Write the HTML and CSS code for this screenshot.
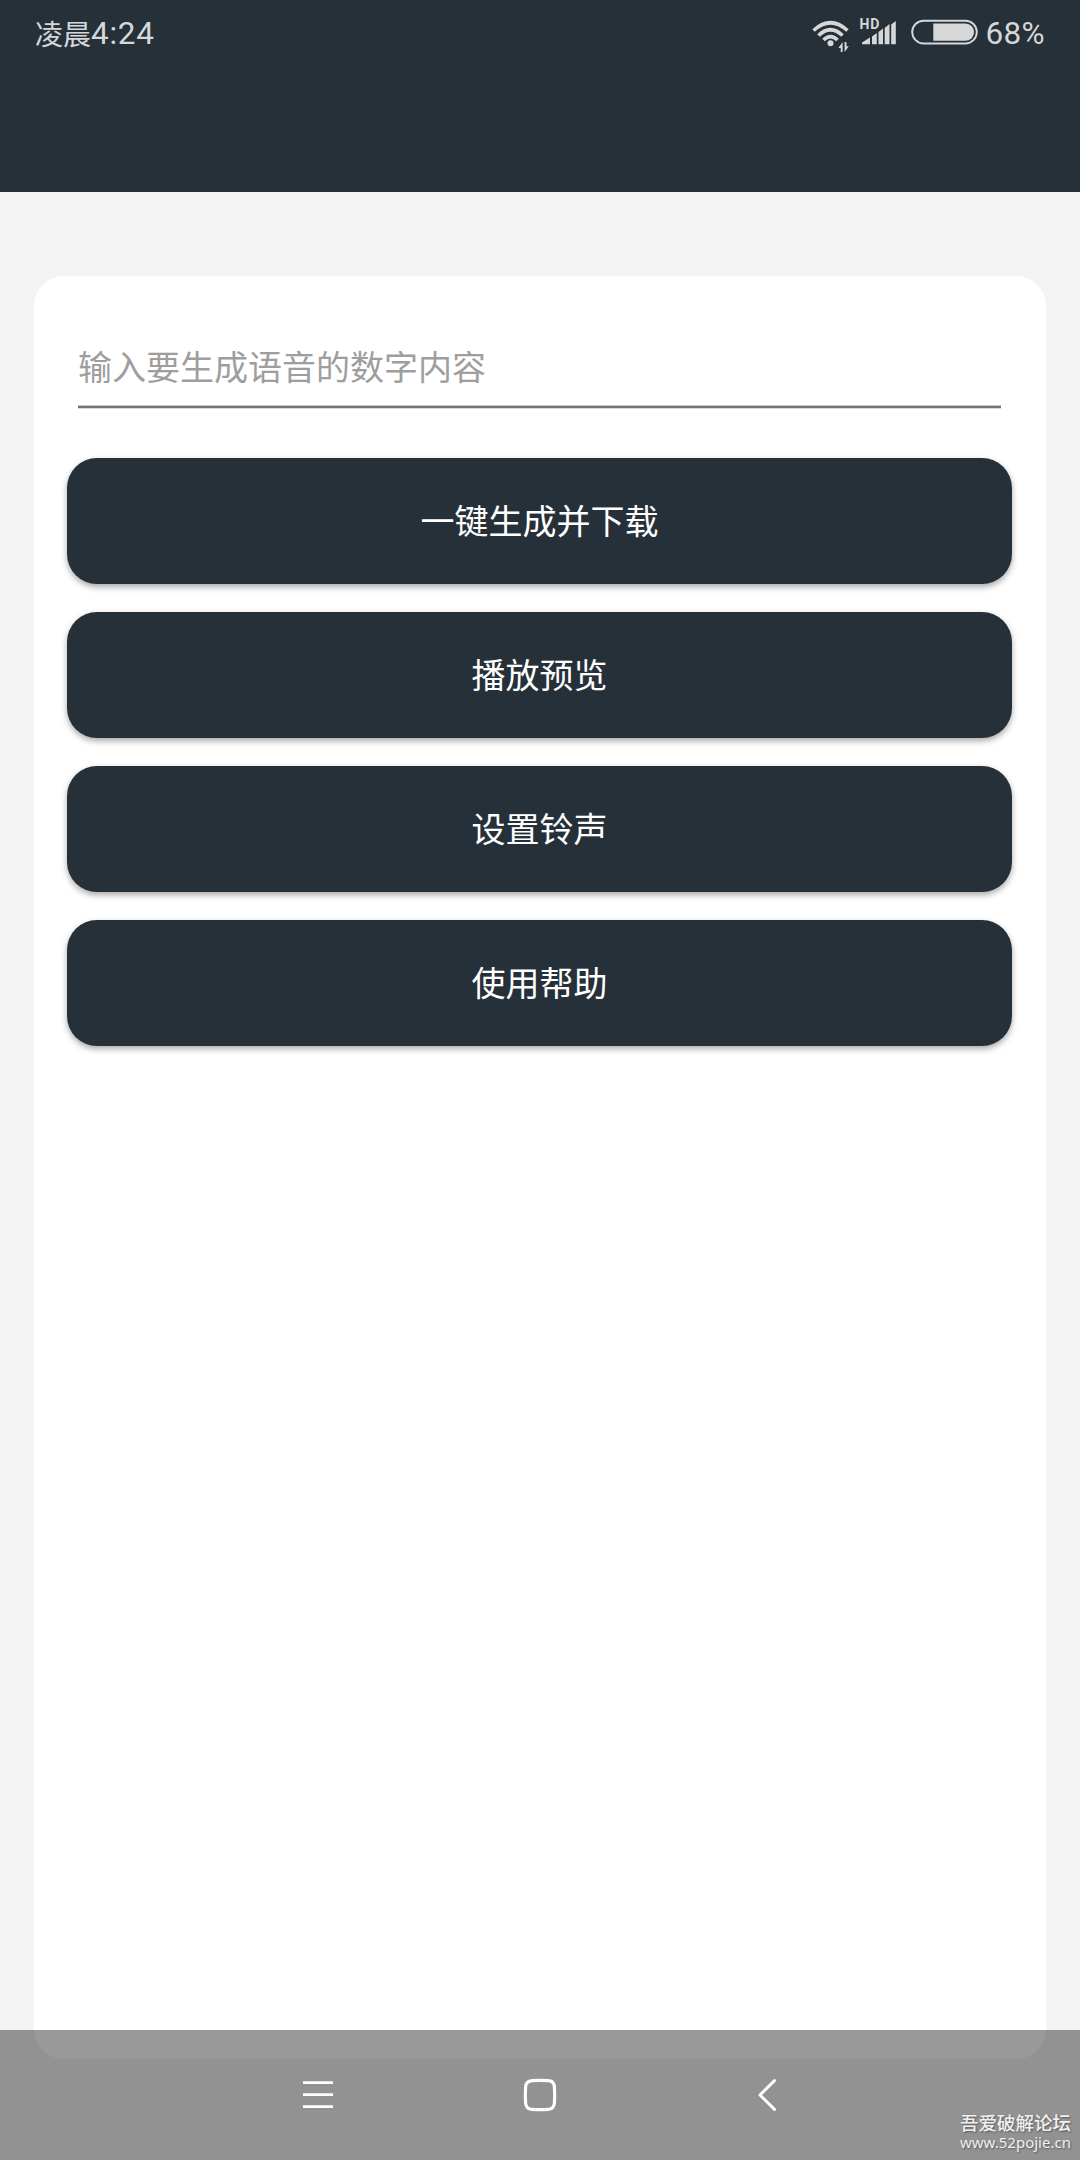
FILE: index.html
```html
<!DOCTYPE html>
<html lang="zh-CN">
<head>
<meta charset="utf-8">
<title>语音生成</title>
<link rel="stylesheet" href="styles.css">
</head>
<body>
<div class="screen">
  <header class="app-header">
    <div class="status-bar">
      <div class="time">凌晨<span class="digits clock">4:24</span></div>
      <div class="indicators">
        <svg class="wifi" width="38" height="34" viewBox="0 0 38 34">
          <g fill="none" stroke="#d5d7d9" stroke-width="3.6">
            <path d="M1.500 11.500Q18.500-4 35.500 11.500"/>
            <path d="M6.500 16.500Q18.500 5 30.500 16.500"/>
            <path d="M11.500 21Q18.500 14 25.500 21"/>
          </g>
          <circle cx="18.500" cy="24.200" r="3" fill="#d5d7d9"/>
          <path d="M30.600 23v10h-1.900v-4h-2.300zM32.600 23h1.900v4.300h2.300L32.600 33z" fill="#d5d7d9"/>
        </svg>
        <div class="cell">
          <span class="hd">HD</span>
          <svg width="37" height="25" viewBox="0 0 37 25" fill="#d5d7d9">
            <path d="M1 24.300V22.500L9 17.500v6.800zM11 16.500l4.800-3.500v11.300H11zM17.500 12l4.500-3.500v15.800h-4.500zM23.700 8l4.800-4v20.300h-4.800zM30.200 4.500L34.800 1v23.300h-4.600z"/>
          </svg>
        </div>
        <svg class="battery" width="67" height="26" viewBox="0 0 67 26">
          <rect x="1.200" y="1.700" width="64.600" height="22.800" rx="11.400" fill="none" stroke="#d5d7d9" stroke-width="1.900"/>
          <path d="M22.300 4.500H54.500a8.600 8.600 0 0 1 0 17.200H22.300z" fill="#d5d7d9"/>
        </svg>
        <span class="percent digits">68%</span>
      </div>
    </div>
  </header>

  <main class="card">
    <div class="field"><span class="placeholder">输入要生成语音的数字内容</span></div>
    <div class="actions">
      <button class="action">一键生成并下载</button>
      <button class="action">播放预览</button>
      <button class="action">设置铃声</button>
      <button class="action">使用帮助</button>
    </div>
  </main>

  <nav class="nav-bar">
    <svg class="nav-icon" width="40" height="40" viewBox="0 0 40 40" fill="none" stroke="#fff" stroke-width="2.700">
      <path d="M5 7.600h30M5 19.600h30M5 31.600h30"/>
    </svg>
    <svg class="nav-icon" width="40" height="40" viewBox="0 0 40 40" fill="none" stroke="#fff" stroke-width="3.200">
      <path d="M12 5.600Q20 5 28 5.600Q34 5.800 34.400 12Q35 20 34.400 28Q34 34 28 34.400Q20 35 12 34.400Q6 34 5.600 28Q5 20 5.600 12Q6 6 12 5.600Z"/>
    </svg>
    <svg class="nav-icon" width="40" height="40" viewBox="0 0 40 40" fill="none" stroke="#fff" stroke-width="2.900" stroke-linecap="round" stroke-linejoin="round">
      <path d="M27.500 5.600L13 20L27.500 34.400"/>
    </svg>
  </nav>
  <div class="watermark">
    <div class="forum">吾爱破解论坛</div>
    <div class="site">www.52pojie.cn</div>
  </div>
</div>
</body>
</html>
```
FILE: styles.css
```css
* { box-sizing: border-box; }
body {
  margin: 0;
  background: #f3f3f3;
  font-family: "Noto Sans CJK SC", sans-serif;
}
.screen {
  position: relative;
  width: 1080px;
  height: 2160px;
  overflow: hidden;
}
.app-header {
  height: 192px;
  background: #263039;
  color: #d5d7d9;
}
.status-bar {
  display: flex;
  justify-content: space-between;
  height: 66px;
  padding: 0 35px;
}
.time {
  display: flex;
  align-items: center;
  font-size: 28px;
}
.digits {
  font-family: Roboto, sans-serif;
  font-size: 31.5px;
  letter-spacing: 0.3px;
}
.clock {
  padding-top: 1px;
  letter-spacing: 0.7px;
}
.indicators { display: flex; }
.wifi { margin: 19px 11px 0 0; }
.cell {
  position: relative;
  width: 37px;
  margin: 20px 13px 0 0;
}
.hd {
  position: absolute;
  left: -1px;
  top: -3px;
  font: 700 14px/14px Roboto, sans-serif;
  letter-spacing: 0.8px;
}
.battery { margin: 19px 8px 0 0; }
.percent { line-height: 68px; }
.card {
  width: 1012px;
  height: 1783px;
  margin: 84px 0 0 34px;
  padding: 62px 34px 0 33px;
  border-radius: 30px;
  background: #fff;
}
.field {
  height: 70px;
  margin: 0 11px;
  border-bottom: 2px solid #757575;
  box-shadow: 0 1px 0 #d8d8d8, inset 0 -1px 0 #c4c4c4;
}
.placeholder {
  display: block;
  font-size: 34px;
  line-height: 55px;
  color: #9e9e9e;
}
.actions {
  display: flex;
  flex-direction: column;
  gap: 28px;
  margin-top: 50px;
}
.action {
  height: 126px;
  padding: 0 0 2px;
  border: 0;
  border-radius: 30px;
  background: #263039;
  box-shadow: 0 3px 6px rgba(0, 0, 0, 0.34);
  color: #fff;
  font: 34px/124px "Noto Sans CJK SC", sans-serif;
}
.nav-bar {
  position: absolute;
  left: 0;
  bottom: 0;
  display: flex;
  gap: 187px;
  width: 1080px;
  height: 130px;
  padding: 45px 0 0 298px;
  background: rgba(0, 0, 0, 0.4);
}
.nav-icon:nth-child(2) { margin-left: -5px; }
.watermark {
  position: absolute;
  right: 9px;
  bottom: 8px;
  color: #f0f0f0;
  text-shadow: 1px 1px 2px rgba(0, 0, 0, 0.4);
}
.forum {
  font-size: 18.500px;
  font-weight: 500;
  line-height: 20px;
}
.site {
  font: 15px/20px "Noto Sans", sans-serif;
}
```
